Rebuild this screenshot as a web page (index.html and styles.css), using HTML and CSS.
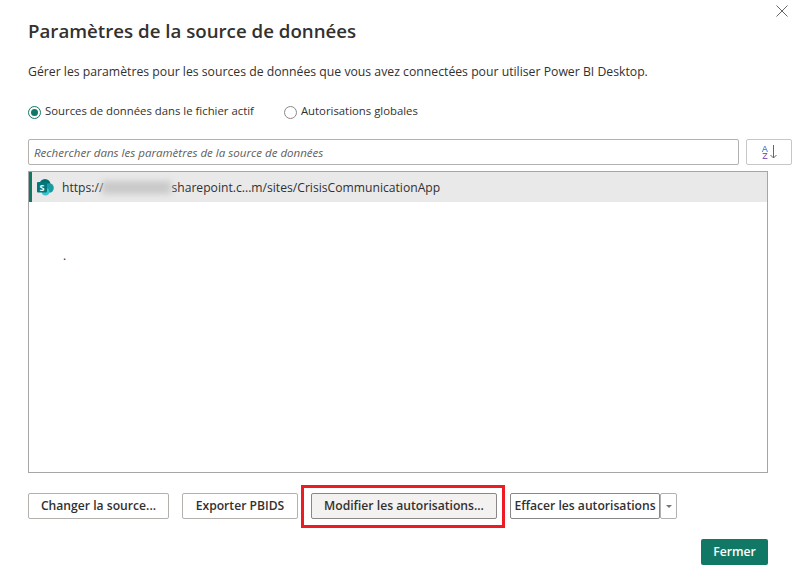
FILE: index.html
```html
<!DOCTYPE html>
<html lang="fr">
<head>
<meta charset="utf-8">
<title>Paramètres de la source de données</title>
<link rel="stylesheet" href="styles.css">
</head>
<body>
<div class="dialog">
  <div class="close-row">
    <svg class="close" width="12" height="12" viewBox="0 0 12 12"><path d="M.5.5l11 11M11.500.5l-11 11" stroke="#666" stroke-width="1" fill="none"/></svg>
  </div>
  <h1 class="title">Paramètres de la source de données</h1>
  <p class="desc">Gérer les paramètres pour les sources de données que vous avez connectées pour utiliser Power BI Desktop.</p>
  <div class="radios">
    <label class="radio"><span class="dot dot-on"></span>Sources de données dans le fichier actif</label>
    <label class="radio"><span class="dot"></span>Autorisations globales</label>
  </div>
  <div class="search-row">
    <div class="search">Rechercher dans les paramètres de la source de données</div>
    <div class="sort">
      <span class="az">A Z</span>
      <svg width="7" height="14" viewBox="0 0 7 14"><path d="M3.500 0v13M.5 10l3 3 3-3" stroke="#666" fill="none"/></svg>
    </div>
  </div>
  <div class="list">
    <div class="row">
      <svg class="sp" width="17" height="17" viewBox="0 0 17 17">
        <circle cx="8" cy="5.500" r="5.500" fill="#036c70"/>
        <circle cx="12" cy="9" r="4.800" fill="#1a9ba1"/>
        <circle cx="8.500" cy="12.800" r="3.800" fill="#37c6d0"/>
        <rect x="0" y="3" width="10" height="10.500" rx="1" fill="#03787c"/>
        <text x="5" y="11.500" class="sp-s">S</text>
      </svg>
      <span class="url">https://<span class="blur"></span>sharepoint.c...m/sites/CrisisCommunicationApp</span>
    </div>
    <div class="stray">.</div>
  </div>
  <div class="actions">
    <button class="btn btn-change">Changer la source...</button>
    <button class="btn btn-export">Exporter PBIDS</button>
    <span class="marked">
      <button class="btn btn-edit">Modifier les autorisations...</button>
      <span class="redbox"></span>
    </span>
    <span class="split">
      <button class="btn btn-clear">Effacer les autorisations</button>
      <button class="btn btn-caret" aria-label="Plus"><span class="caret"></span></button>
    </span>
  </div>
  <div class="footer">
    <button class="btn-primary">Fermer</button>
  </div>
</div>
</body>
</html>
```

FILE: styles.css
```css
* { box-sizing: border-box; }
html, body { margin: 0; padding: 0; background: #fff; }
body { width: 796px; height: 588px; overflow: hidden; font-family: "Open Sans", "Noto Sans", sans-serif; color: #323130; }
.dialog { display: flex; flex-direction: column; padding: 0 28px; width: 796px; height: 588px; }
.close-row { display: flex; justify-content: flex-end; height: 5px; margin-right: -20px; padding-top: 5px; }
.close { display: block; flex: none; }
.title { margin: 14px 0 0; font-size: 18.7px; line-height: 24px; font-weight: 600; color: #323130; }
.desc { margin: 20px 0 0; font-size: 12.24px; line-height: 18px; color: #323130; }
.radios { display: flex; gap: 30px; margin-top: 21px; font-size: 11.35px; line-height: 18px; }
.radio { display: flex; align-items: center; gap: 4px; }
.dot { width: 13px; height: 13px; border: 1px solid #8a8886; border-radius: 50%; background: #fff; flex: none; position: relative; top: 1px; }
.dot-on { border-color: #117865; }
.dot-on::after { content: ""; display: block; width: 7px; height: 7px; margin: 2px; border-radius: 50%; background: #117865; }
.search-row { display: flex; justify-content: space-between; margin-top: 19px; margin-right: -24px; }
.search { width: 711px; height: 26px; border: 1px solid #b3b0ad; border-radius: 2px; padding: 0 5px; font-size: 11.55px; line-height: 25px; font-style: italic; color: #605e5c; }
.sort { width: 46px; height: 26px; border: 1px solid #c8c6c4; border-radius: 2px; display: flex; justify-content: center; align-items: center; gap: 1px; }
.az { width: 8px; font-size: 9.500px; line-height: 7.500px; font-weight: 600; text-align: center; background: linear-gradient(#5b8fd0 50%, #8a5cb5 50%); -webkit-background-clip: text; background-clip: text; color: transparent; }
.list { margin-top: 6px; width: 740px; height: 302px; border: 1px solid #a6a6a6; position: relative; }
.row { height: 30px; background: #e9e9e9; border-left: 3px solid #117865; display: flex; align-items: center; padding-left: 5px; gap: 8px; }
.sp { flex: none; }
.sp-s { font-size: 9px; font-weight: 700; fill: #fff; text-anchor: middle; font-family: "Open Sans", sans-serif; }
.url { font-size: 12.15px; line-height: 18px; padding-top: 1px; white-space: nowrap; }
.blur { display: inline-block; width: 69px; height: 13px; margin-left: -1px; vertical-align: -2px; background: #c9c9c9; filter: blur(3px); }
.stray { position: absolute; left: 34px; top: 76px; font-size: 12px; line-height: 16px; }
.actions { display: flex; margin-top: 20px; }
.btn { height: 26px; padding: 0; background: #fff; border: 1px solid #b3b0ad; border-radius: 2px; font: 600 12.15px/24px "Open Sans", sans-serif; color: #323130; white-space: nowrap; }
.btn-change { width: 141px; }
.btn-export { width: 116px; margin-left: 13px; }
.marked { position: relative; margin-left: 13px; display: flex; }
.btn-edit { width: 186px; background: #f3f2f1; border-color: #8a8886; }
.redbox { position: absolute; left: -10px; top: -8px; right: -8px; bottom: -9px; border: 3px solid #ed1c24; }
.split { display: flex; margin-left: 13px; }
.btn-clear { width: 150px; border-color: #8a8886; }
.btn-caret { width: 17px; display: flex; align-items: center; justify-content: center; }
.caret { width: 0; height: 0; border: 3px solid transparent; border-top: 3px solid #797775; border-bottom: 0; }
.footer { display: flex; justify-content: flex-end; margin-top: 20px; }
.btn-primary { width: 67px; height: 26px; padding: 0; border: 0; border-radius: 2px; background: #117865; color: #fff; font: 600 12.15px/26px "Open Sans", sans-serif; }
```
